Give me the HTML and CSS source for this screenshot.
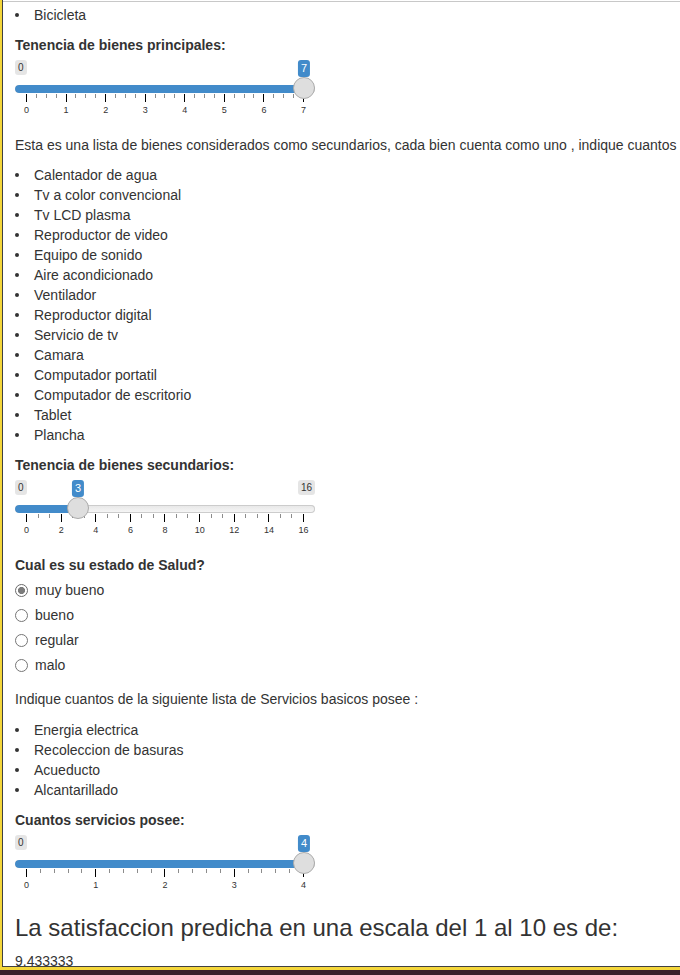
FILE: index.html
```html
<!DOCTYPE html>
<html lang="es">
<head>
<meta charset="utf-8">
<title>Satisfaccion</title>
<link rel="stylesheet" href="styles.css">
</head>
<body>
<div class="frame">
  <div class="viewport">
    <div class="topline"></div>
    <div class="content">
      <ul class="list">
        <li>Bicicleta</li>
      </ul>

      <div class="form-group">
        <label class="control-label">Tenencia de bienes principales:</label>
        <div class="slider" style="--p:1">
          <div class="irs-labels"><span class="irs-min">0</span><span class="irs-max is-hidden">7</span></div>
          <span class="irs-single">7</span>
          <div class="irs-line"><div class="irs-bar"></div></div>
          <span class="irs-handle"></span>
          <div class="irs-grid">
            <i class="b"></i><i></i><i></i><i></i>
            <i class="b"></i><i></i><i></i><i></i>
            <i class="b"></i><i></i><i></i><i></i>
            <i class="b"></i><i></i><i></i><i></i>
            <i class="b"></i><i></i><i></i><i></i>
            <i class="b"></i><i></i><i></i><i></i>
            <i class="b"></i><i></i><i></i><i></i>
            <i class="b"></i>
          </div>
          <div class="irs-grid-text">
            <span>0</span><span>1</span><span>2</span><span>3</span><span>4</span><span>5</span><span>6</span><span>7</span>
          </div>
        </div>
      </div>

      <p class="nowrap">Esta es una lista de bienes considerados como secundarios, cada bien cuenta como uno , indique cuantos posee :</p>
      <ul class="list">
        <li>Calentador de agua</li>
        <li>Tv a color convencional</li>
        <li>Tv LCD plasma</li>
        <li>Reproductor de video</li>
        <li>Equipo de sonido</li>
        <li>Aire acondicionado</li>
        <li>Ventilador</li>
        <li>Reproductor digital</li>
        <li>Servicio de tv</li>
        <li>Camara</li>
        <li>Computador portatil</li>
        <li>Computador de escritorio</li>
        <li>Tablet</li>
        <li>Plancha</li>
      </ul>

      <div class="form-group">
        <label class="control-label">Tenencia de bienes secundarios:</label>
        <div class="slider" style="--p:0.1875">
          <div class="irs-labels"><span class="irs-min">0</span><span class="irs-max">16</span></div>
          <span class="irs-single">3</span>
          <div class="irs-line"><div class="irs-bar"></div></div>
          <span class="irs-handle"></span>
          <div class="irs-grid">
            <i class="b"></i><i></i><i></i>
            <i class="b"></i><i></i><i></i>
            <i class="b"></i><i></i><i></i>
            <i class="b"></i><i></i><i></i>
            <i class="b"></i><i></i><i></i>
            <i class="b"></i><i></i><i></i>
            <i class="b"></i><i></i><i></i>
            <i class="b"></i><i></i><i></i>
            <i class="b"></i>
          </div>
          <div class="irs-grid-text">
            <span>0</span><span>2</span><span>4</span><span>6</span><span>8</span><span>10</span><span>12</span><span>14</span><span>16</span>
          </div>
        </div>
      </div>

      <div class="form-group radio-form">
        <label class="control-label">Cual es su estado de Salud?</label>
        <div class="radio-group">
          <label class="radio"><input type="radio" name="salud" checked><span>muy bueno</span></label>
          <label class="radio"><input type="radio" name="salud"><span>bueno</span></label>
          <label class="radio"><input type="radio" name="salud"><span>regular</span></label>
          <label class="radio"><input type="radio" name="salud"><span>malo</span></label>
        </div>
      </div>

      <p class="intro">Indique cuantos de la siguiente lista de Servicios basicos posee :</p>
      <ul class="list">
        <li>Energia electrica</li>
        <li>Recoleccion de basuras</li>
        <li>Acueducto</li>
        <li>Alcantarillado</li>
      </ul>

      <div class="form-group">
        <label class="control-label">Cuantos servicios posee:</label>
        <div class="slider" style="--p:1">
          <div class="irs-labels"><span class="irs-min">0</span><span class="irs-max is-hidden">4</span></div>
          <span class="irs-single">4</span>
          <div class="irs-line"><div class="irs-bar"></div></div>
          <span class="irs-handle"></span>
          <div class="irs-grid">
            <i class="b"></i><i></i><i></i><i></i><i></i>
            <i class="b"></i><i></i><i></i><i></i><i></i>
            <i class="b"></i><i></i><i></i><i></i><i></i>
            <i class="b"></i><i></i><i></i><i></i><i></i>
            <i class="b"></i>
          </div>
          <div class="irs-grid-text">
            <span>0</span><span>1</span><span>2</span><span>3</span><span>4</span>
          </div>
        </div>
      </div>

      <h3 class="result-title">La satisfaccion predicha en una escala del 1 al 10 es de:</h3>
      <div class="output">9.433333</div>
    </div>
  </div>
</div>
</body>
</html>
```

FILE: styles.css
```css
html, body {
  margin: 0;
  padding: 0;
}

body {
  height: 975px;
  overflow: hidden;
  background: #3b2129;
  font-family: "Liberation Sans", Arial, Helvetica, sans-serif;
  font-size: 14px;
  line-height: 20px;
  color: #333333;
}

.frame {
  height: 970px;
  box-sizing: border-box;
  border-left: 2px solid #f4d63a;
  border-bottom: 3px solid #f4d63a;
}

.viewport {
  height: 967px;
  box-sizing: border-box;
  border-left: 1px solid #404040;
  border-bottom: 1px solid #404040;
  background: #ffffff;
  overflow: hidden;
}

.topline {
  height: 1px;
  margin-top: 1px;
  background: #c8c8c8;
}

.content {
  padding: 3px 0 0 12px;
}

p {
  margin: 0 0 10px;
}

.nowrap {
  white-space: nowrap;
}

.intro {
  margin-bottom: 11px;
}

.list {
  margin: 0 0 10px;
  padding: 0 0 0 19px;
  list-style: none;
}

.list li {
  position: relative;
}

.list li::before {
  content: "";
  position: absolute;
  left: -19px;
  top: 8px;
  width: 4px;
  height: 4px;
  border-radius: 50%;
  background: #333333;
}

.form-group {
  margin-bottom: 15px;
}

.radio-form {
  margin-bottom: 14px;
}

.control-label {
  display: block;
  margin-bottom: 5px;
  font-weight: bold;
}

/* slider */
.slider {
  position: relative;
  width: 300px;
  height: 60px;
}

.irs-labels {
  display: flex;
  justify-content: space-between;
  align-items: flex-start;
  height: 16px;
}

.irs-min,
.irs-max {
  font-size: 10px;
  line-height: 1.333;
  padding: 1px 3px;
  background: rgba(0, 0, 0, 0.1);
  border-radius: 3px;
  color: #333333;
}

.is-hidden {
  visibility: hidden;
}

.irs-single {
  position: absolute;
  top: 0;
  left: calc(11px + var(--p) * (100% - 22px));
  transform: translateX(-50%);
  font-size: 11px;
  line-height: 1.333;
  padding: 1px 3px;
  background: #428bca;
  color: #ffffff;
  border-radius: 3px;
  white-space: nowrap;
}

.irs-line {
  margin-top: 9px;
  height: 8px;
  border-radius: 16px;
  background: linear-gradient(to bottom, #dedede -50%, #ffffff 150%);
  box-shadow: inset 0 0 0 1px #cccccc;
  overflow: hidden;
}

.irs-bar {
  height: 8px;
  width: calc(11px + var(--p) * (100% - 22px));
  background: #428bca;
  border-radius: 16px 0 0 16px;
}

.irs-handle {
  position: absolute;
  top: 17px;
  left: calc(var(--p) * (100% - 22px));
  width: 22px;
  height: 22px;
  box-sizing: border-box;
  border: 1px solid #ababab;
  border-radius: 50%;
  background: #dedede;
}

.irs-grid {
  display: flex;
  justify-content: space-between;
  align-items: flex-start;
  margin-top: 1px;
  padding: 0 11px;
  height: 8px;
}

.irs-grid i {
  display: block;
  width: 1px;
  height: 4px;
  background: #8c8c8c;
}

.irs-grid i.b {
  height: 8px;
  background: #000000;
}

.irs-grid-text {
  display: flex;
  justify-content: space-between;
  margin-top: 3px;
  padding: 0 11px;
  font-size: 9px;
  line-height: 11px;
  color: #333333;
}

.irs-grid-text span {
  display: flex;
  justify-content: center;
  width: 1px;
  white-space: nowrap;
}

/* radios */
.radio-group {
  display: flex;
  flex-direction: column;
  gap: 5px;
  padding-top: 0;
}

.radio {
  display: flex;
  align-items: center;
  height: 20px;
}

.radio input {
  appearance: none;
  -webkit-appearance: none;
  width: 13px;
  height: 13px;
  margin: 0 7px 0 0;
  box-sizing: border-box;
  border: 1px solid #767676;
  border-radius: 50%;
  background: #ffffff;
}

.radio input:checked {
  border-color: #6b6b6b;
  background: radial-gradient(circle, #7b7b7b 0 3.3px, #ffffff 3.8px);
}

.result-title {
  margin: 20px 0 10px;
  font-size: 24px;
  line-height: 1.1;
  font-weight: normal;
  color: #333333;
}

.output {
  line-height: 20px;
}
```
